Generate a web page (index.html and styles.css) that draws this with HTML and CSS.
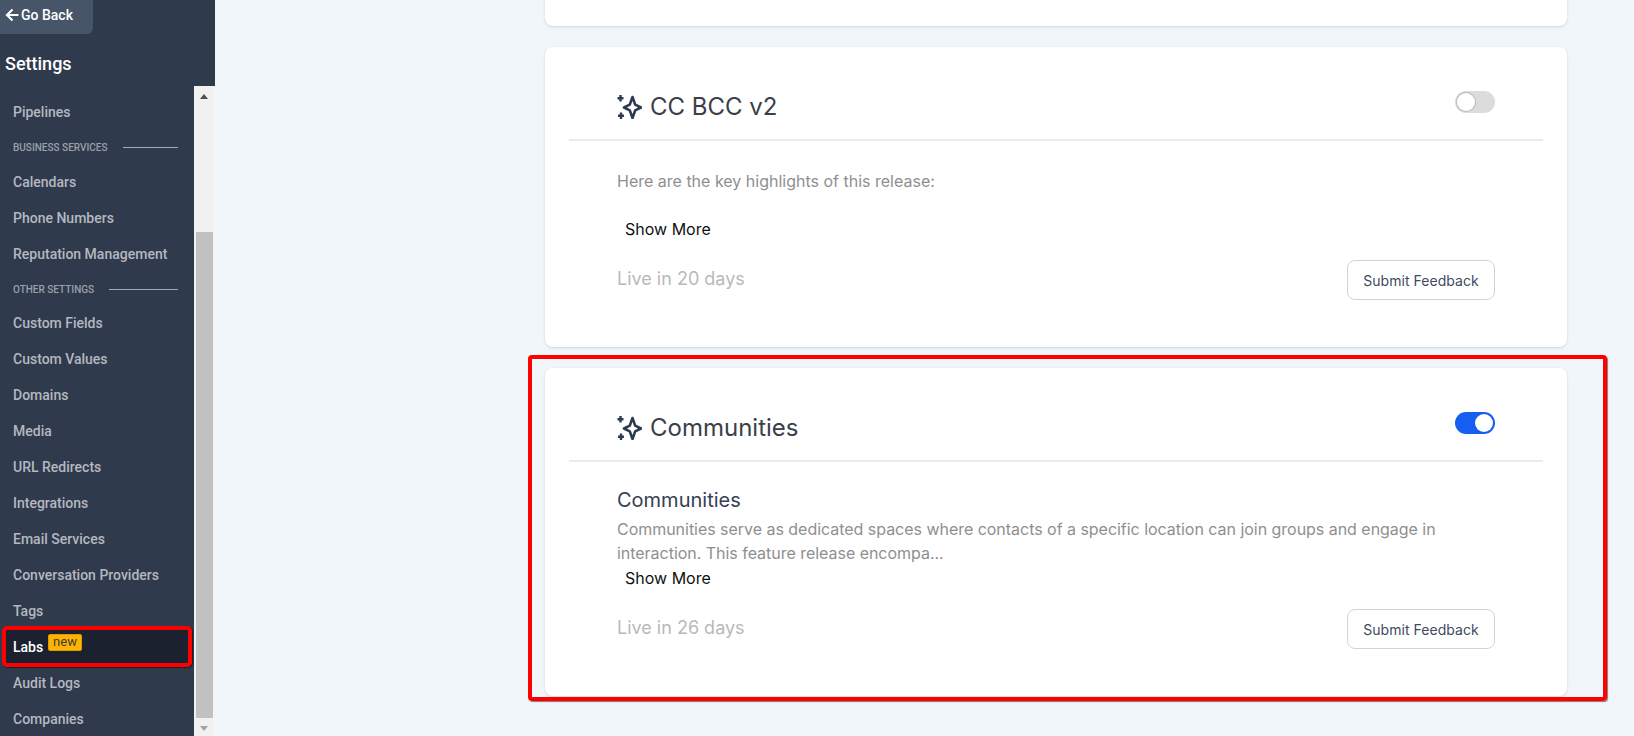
FILE: index.html
```html
<!DOCTYPE html>
<html lang="en">
<head>
<meta charset="utf-8">
<title>Labs</title>
<link rel="stylesheet" href="styles.css">
</head>
<body>
<div class="app">
  <aside class="sidebar">
    <a class="back"><svg class="back-arrow" viewBox="0 0 14 14" width="14" height="14"><path d="M13.500 7H2M7.500 1.500 2 7l5.500 5.500" fill="none" stroke="#fff" stroke-width="2.200"/></svg>Go Back</a>
    <h2 class="side-title">Settings</h2>
    <div class="nav-wrap">
      <nav class="nav">
        <a class="item">Pipelines</a>
        <div class="label"><span>BUSINESS SERVICES</span><i></i></div>
        <a class="item">Calendars</a>
        <a class="item">Phone Numbers</a>
        <a class="item">Reputation Management</a>
        <div class="label tight"><span>OTHER SETTINGS</span><i></i></div>
        <a class="item">Custom Fields</a>
        <a class="item">Custom Values</a>
        <a class="item">Domains</a>
        <a class="item">Media</a>
        <a class="item">URL Redirects</a>
        <a class="item">Integrations</a>
        <a class="item">Email Services</a>
        <a class="item">Conversation Providers</a>
        <a class="item">Tags</a>
        <a class="item active">Labs<span class="badge">new</span></a>
        <a class="item">Audit Logs</a>
        <a class="item">Companies</a>
      </nav>
      <div class="scrollbar">
        <span class="arrow up"></span>
        <span class="thumb"></span>
        <span class="arrow down"></span>
      </div>
    </div>
  </aside>
  <main class="main">
    <section class="card card-cut"></section>

    <section class="card">
      <header class="head">
        <h3 class="title"><svg class="spark" viewBox="0 0 25 24" width="25" height="24"><path d="M15.500 2 18.200 9.600 24 12.500 18.200 15.400 15.500 23 12.800 15.400 7 12.500 12.800 9.600Z" fill="none" stroke="#2d3a50" stroke-width="2.600" stroke-linejoin="round"/><path d="M3.500 0v6.500M.5 3.200h6M4 17.500v6.500M1 20.800h6" fill="none" stroke="#2d3a50" stroke-width="2.400"/></svg>CC BCC v2</h3>
        <span class="toggle"><span class="knob"></span></span>
      </header>
      <div class="body">
        <p class="highlights">Here are the key highlights of this release:</p>
        <a class="more">Show More</a>
        <footer class="foot"><span class="live">Live in 20 days</span><button class="btn">Submit Feedback</button></footer>
      </div>
    </section>

    <section class="card">
      <header class="head">
        <h3 class="title"><svg class="spark" viewBox="0 0 25 24" width="25" height="24"><path d="M15.500 2 18.200 9.600 24 12.500 18.200 15.400 15.500 23 12.800 15.400 7 12.500 12.800 9.600Z" fill="none" stroke="#2d3a50" stroke-width="2.600" stroke-linejoin="round"/><path d="M3.500 0v6.500M.5 3.200h6M4 17.500v6.500M1 20.800h6" fill="none" stroke="#2d3a50" stroke-width="2.400"/></svg>Communities</h3>
        <span class="toggle on"><span class="knob"></span></span>
      </header>
      <div class="body">
        <h4 class="feat-title">Communities</h4>
        <p class="desc">Communities serve as dedicated spaces where contacts of a specific location can join groups and engage in interaction. This feature release encompa...</p>
        <a class="more">Show More</a>
        <footer class="foot"><span class="live">Live in 26 days</span><button class="btn">Submit Feedback</button></footer>
      </div>
    </section>
  </main>
  <div class="mark mark-labs"></div>
  <div class="mark mark-card"></div>
</div>
</body>
</html>
```
FILE: styles.css
```css
* { box-sizing: border-box; }
html, body { margin: 0; height: 100%; overflow: hidden; }
body { background: #f1f6fa; font-family: Inter, "Liberation Sans", sans-serif; }
.app { position: relative; display: flex; width: 1634px; height: 736px; overflow: hidden; }

.sidebar { width: 215px; flex: none; height: 736px; background: #2f3a4c; display: flex; flex-direction: column; font-family: Roboto, "Liberation Sans", sans-serif; }
.back { width: 93px; height: 34px; flex: none; display: flex; align-items: center; gap: 2px; padding: 0 0 4px 5px; background: #475569; border-bottom-right-radius: 6px; color: #fff; font-size: 14px; font-weight: 500; }
.back-arrow { flex: none; }
.side-title { margin: 0; height: 52px; flex: none; padding: 18px 0 0 5px; color: #fff; font-size: 18px; line-height: 24px; font-weight: 500; }

.nav-wrap { flex: 1; min-height: 0; display: flex; background: #f1f6fa; }
.nav { width: 194px; flex: none; padding-top: 8px; background: #2f3a4c; overflow: hidden; }
.item { position: relative; display: flex; align-items: center; height: 36px; padding-left: 13px; color: #b4b8c0; font-size: 14px; font-weight: 500; white-space: nowrap; }
.item.active { color: #fff; background: #1b212e; margin: 0 4px; padding-left: 9px; }
.badge { position: absolute; left: 44px; top: 5px; height: 17px; width: 34px; background: #ffb300; border: 1px solid #d99c08; border-radius: 2px; color: #3a3a3a; font-size: 13px; font-weight: 400; line-height: 14px; text-align: center; }
.label { display: flex; align-items: center; height: 34px; padding: 0 16px 0 13px; color: #9aa0aa; font-size: 10px; font-weight: 500; white-space: nowrap; }
.label.tight { height: 33px; padding-top: 1px; }
.label i { flex: 1; height: 1px; margin-left: 15px; background: #a5a9b1; }

.scrollbar { width: 19px; flex: none; height: 100%; padding: 0 0 0 2px; background: #f1f1f1; position: relative; display: flex; flex-direction: column; align-items: center; }
.thumb { position: absolute; left: 2px; top: 146px; width: 17px; height: 486px; background: #c1c1c1; }
.arrow { position: absolute; left: 6px; width: 0; height: 0; border-left: 4px solid transparent; border-right: 4px solid transparent; }
.arrow.up { top: 8px; border-bottom: 5px solid #505050; }
.arrow.down { bottom: 5px; border-top: 5px solid #a3a3a3; }

.main { flex: 1; min-width: 0; height: 736px; padding: 0 67px 0 330px; display: flex; flex-direction: column; gap: 21px; overflow: hidden; }
.card { flex: none; background: #fff; border-radius: 8px; padding: 0 24px 47px; box-shadow: 0 1px 3px rgba(16, 24, 40, .14); }
.card-cut { height: 46px; margin-top: -20px; padding: 0; }
.head { display: flex; justify-content: space-between; align-items: flex-start; padding: 44px 48px 16px; border-bottom: 2px solid #e9ebf0; }
.title { display: flex; align-items: center; gap: 8px; margin: 0; color: #3a3f4a; font-size: 24px; line-height: 32px; font-weight: 400; }
.spark { flex: none; }
.toggle { display: block; width: 40px; height: 22px; padding: 2px; border-radius: 11px; background: #dcdcdc; }
.toggle .knob { display: block; width: 18px; height: 18px; border-radius: 50%; background: #fff; box-shadow: 0 0 0 1px #bbb; }
.toggle.on { background: #155eef; }
.toggle.on .knob { margin-left: 18px; box-shadow: none; }

.body { padding: 24px 48px 0; }
.highlights { margin: 4px 0 24px; color: #8f8f8f; font-size: 16px; line-height: 24px; }
.feat-title { margin: 1px 0 4px; color: #344054; font-size: 20px; line-height: 26px; font-weight: 400; }
.desc { margin: 0 0 1px; color: #8f8f8f; font-size: 16px; line-height: 24px; letter-spacing: -.03px; }
.more { display: block; padding-left: 8px; color: #111; font-size: 16px; line-height: 24px; }
.foot { display: flex; justify-content: space-between; align-items: flex-start; margin-top: 19px; }
.live { color: #b9b9b9; font-size: 18px; line-height: 37px; }
.btn { width: 148px; height: 40px; padding: 0; background: #fff; border: 1px solid #d0d5dd; border-radius: 8px; color: #3f4a5e; font-family: inherit; font-size: 14px; font-weight: 400; letter-spacing: .05px; }

.mark { position: absolute; border: 4px solid #f00; border-radius: 4px; box-shadow: 1px 1px 1px rgba(0, 0, 0, .5); pointer-events: none; }
.mark-labs { left: 2px; top: 626px; width: 190px; height: 41px; border-radius: 5px; }
.mark-card { left: 528px; top: 355px; width: 1079px; height: 346px; }
```
